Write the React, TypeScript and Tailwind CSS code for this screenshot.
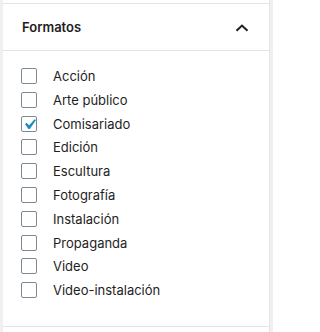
import React from "react";

const items = [
  { label: "Acción", checked: false },
  { label: "Arte público", checked: false },
  { label: "Comisariado", checked: true },
  { label: "Edición", checked: false },
  { label: "Escultura", checked: false },
  { label: "Fotografía", checked: false },
  { label: "Instalación", checked: false },
  { label: "Propaganda", checked: false },
  { label: "Video", checked: false },
  { label: "Video-instalación", checked: false },
];

export default function App() {
  return (
    <div
      className="w-[273px] h-[332px] bg-[#f0f0f0] pl-[3px] pr-[3px] overflow-hidden"
      style={{ fontFamily: "Inter, 'Noto Sans', sans-serif" }}
    >
      <div className="bg-white border-r border-[#e2e4e7] h-full flex flex-col w-[267px]">
        <div className="h-[3px]" />
        <div className="border-t border-[#e2e4e7] h-[47px] flex items-center justify-between pl-[19px] pr-[20px]">
          <span className="text-[13px] font-semibold text-[#1e1e1e] leading-none">Formatos</span>
          <svg width="14" height="8" viewBox="0 0 14 8" className="mt-[1px]">
            <path d="M1.5 6.8 L7 1.6 L12.5 6.8" fill="none" stroke="#1e1e1e" strokeWidth="2" />
          </svg>
        </div>
        <div className="border-t border-[#e2e4e7] pt-[17px] pl-[18px] h-[277px] border-b">
          {items.map((it) => (
            <div key={it.label} className="h-[23.8px] flex items-start">
              <div className="relative w-[16px] h-[16px] border border-[#7e8993] rounded-[2px] bg-white shrink-0">
                {it.checked && (
                  <svg
                    viewBox="0 0 20 20"
                    className="absolute w-[21px] h-[21px] left-[-3px] top-[-3px]"
                  >
                    <path
                      d="M14.83 4.89l1.34.94-5.81 8.38H9.02L5.78 9.67l1.34-1.25 2.57 2.4z"
                      fill="#1e8cbe"
                    />
                  </svg>
                )}
              </div>
              <span className="ml-[16px] text-[13px] text-[#1e1e1e] leading-[16px]">{it.label}</span>
            </div>
          ))}
        </div>
      </div>
    </div>
  );
}
